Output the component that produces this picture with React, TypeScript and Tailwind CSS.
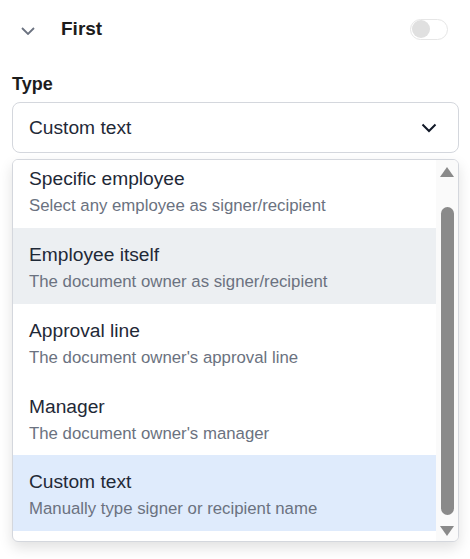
import React from "react";

const items = [
  { t: "Specific employee", s: "Select any employee as signer/recipient", bg: "bg-white" },
  { t: "Employee itself", s: "The document owner as signer/recipient", bg: "bg-[#eceff2]" },
  { t: "Approval line", s: "The document owner's approval line", bg: "bg-white" },
  { t: "Manager", s: "The document owner's manager", bg: "bg-white" },
  { t: "Custom text", s: "Manually type signer or recipient name", bg: "bg-[#dfebfc]" },
];

export default function App() {
  return (
    <div className="w-[470px] h-[559px] bg-white overflow-hidden font-['Liberation_Sans',Arial,sans-serif]">
      <div className="flex items-center h-[58px] pl-[21px] pr-[22px]">
        <svg width="14" height="8" viewBox="0 0 14 8" className="mt-[3px]">
          <path d="M1 1l6 6 6-6" fill="none" stroke="#6b7280" strokeWidth="1.8" />
        </svg>
        <span className="ml-[26px] text-[19px] font-bold text-[#1c1c1c] leading-6">First</span>
        <div className="ml-auto w-[38px] h-[21px] rounded-full border border-[#e6e6e6] bg-white flex items-center pl-[1px]">
          <div className="w-[18px] h-[18px] rounded-full bg-[#e0e0e0]" />
        </div>
      </div>
      <div className="px-[12px] pr-[11px]">
        <div className="mt-[15px] text-[18px] font-bold text-[#1c1c1c] leading-[22px]">Type</div>
        <div className="mt-[7px] h-[51px] rounded-[8px] border border-[#d4d7dd] flex items-center pl-[16px] pr-[21px]">
          <span className="text-[19.2px] text-[#1f2937] leading-6">Custom text</span>
          <svg width="16" height="10" viewBox="0 0 16 10" className="ml-auto">
            <path d="M1.5 1.5l6.5 6.5 6.5-6.5" fill="none" stroke="#111827" strokeWidth="2" />
          </svg>
        </div>
        <div className="mt-[6px] h-[383px] rounded-[6px] border border-[#d4d7dd] bg-white shadow-[0_6px_14px_rgba(0,0,0,0.12)] flex overflow-hidden">
          <div className="flex-1 overflow-hidden">
            <div className="mt-[-7.75px]">
              {items.map((it) => (
                <div key={it.t} className={`h-[75.75px] pl-[16px] pt-[15px] ${it.bg}`}>
                  <div className="text-[19.2px] leading-6 text-[#1f2937]">{it.t}</div>
                  <div className="mt-[5px] text-[16.8px] leading-5 text-[#6b7280]">{it.s}</div>
                </div>
              ))}
            </div>
          </div>
          <div className="w-[22px] bg-[#fafafa] flex flex-col items-center pt-[6.5px] pb-[5px]">
            <svg width="14" height="10" viewBox="0 0 14 10">
              <path d="M7 0L14 10H0Z" fill="#8a8a8a" />
            </svg>
            <div className="mt-[30px] w-[13px] h-[308px] rounded-full bg-[#8a8a8a]" />
            <svg width="14" height="10" viewBox="0 0 14 10" className="mt-[11px]">
              <path d="M0 0H14L7 10Z" fill="#8a8a8a" />
            </svg>
          </div>
        </div>
      </div>
    </div>
  );
}
